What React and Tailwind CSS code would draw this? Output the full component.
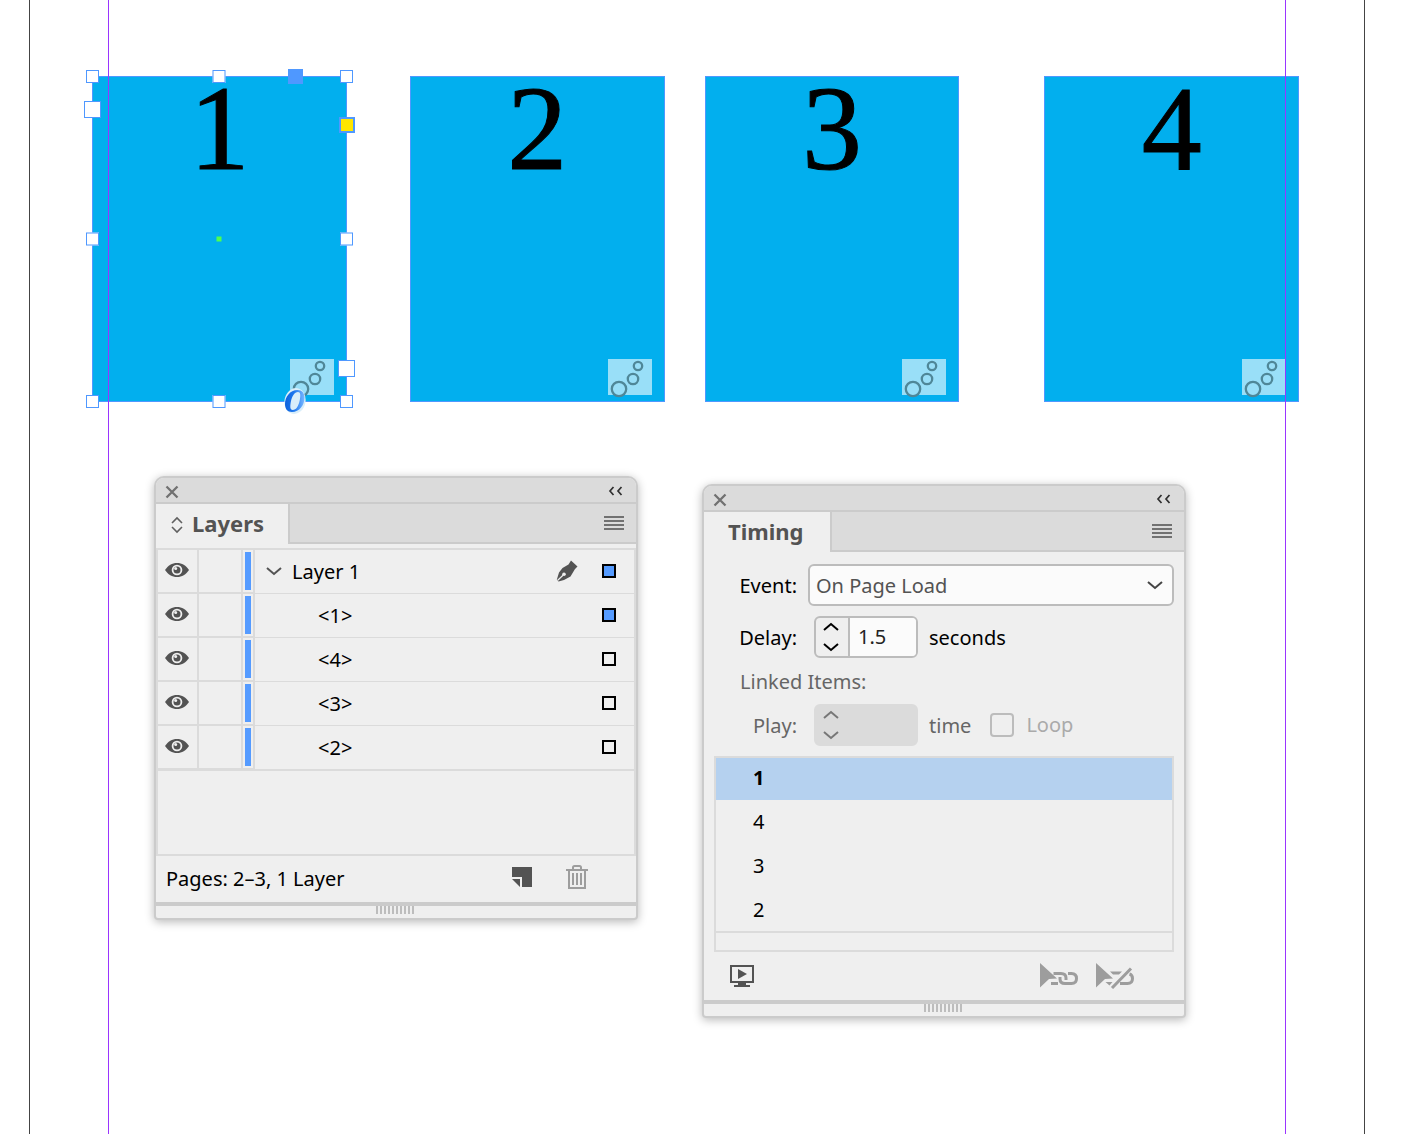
import React from "react";

const HANDLE = "absolute size-[13px] border border-[#4f98ff] bg-white";

function Badge() {
  return (
    <div className="absolute right-3 bottom-[6px] h-9 w-11 bg-[#99dff8]">
      <svg className="overflow-visible" width="44" height="36" fill="none" stroke="#4f8798" strokeWidth="2.300">
        <circle cx="11" cy="30" r="7.200" />
        <circle cx="25" cy="20" r="5.200" />
        <circle cx="30" cy="7" r="4.200" />
      </svg>
    </div>
  );
}

function Selection() {
  return (
    <>
      <span className={`${HANDLE} -top-[7px] -left-[7px]`} />
      <span className={`${HANDLE} -top-[7px] left-1/2 -translate-x-1/2`} />
      <span className={`${HANDLE} -top-[7px] -right-[7px]`} />
      <span className={`${HANDLE} top-1/2 -left-[7px] -translate-y-1/2`} />
      <span className={`${HANDLE} top-1/2 -right-[7px] -translate-y-1/2`} />
      <span className={`${HANDLE} -bottom-[7px] -left-[7px]`} />
      <span className={`${HANDLE} -bottom-[7px] left-1/2 -translate-x-1/2`} />
      <span className={`${HANDLE} -right-[7px] -bottom-[7px]`} />
      <span className="absolute top-6 -left-[9px] size-[17px] border border-[#4f98ff] bg-white" />
      <span className="absolute -right-[9px] bottom-6 size-[17px] border border-[#4f98ff] bg-white" />
      <span className="absolute -top-2 right-[43px] size-[15px] bg-[#4f98ff]" />
      <span className="absolute top-10 -right-[9px] size-4 border-2 border-[#4f98ff] bg-[#ffe600]" />
      <span className="absolute top-1/2 left-1/2 size-[5px] -translate-x-1/2 -translate-y-1/2 bg-[#4fff4f]" />
      <svg className="absolute right-[38px] -bottom-3.5" width="26" height="28" viewBox="0 0 26 28" fill="none">
        <defs>
          <linearGradient id="ring" x1="0" y1="0" x2="1" y2="0">
            <stop offset="0" stopColor="#0f62dc" />
            <stop offset="0.45" stopColor="#1c76ee" />
            <stop offset="1" stopColor="#7ab8ff" />
          </linearGradient>
        </defs>
        <ellipse cx="13" cy="14" rx="10.500" ry="13" transform="rotate(12 13 14)" fill="#d9eefa" />
        <path
          fillRule="evenodd"
          fill="url(#ring)"
          d="M15.500 3C8 3 3 10 3 17c0 5 2.500 8 7 8 7.500 0 12.500-7 12.500-14.500C22.500 6 20 3 15.500 3zM16 5c2.500 0 2.800 3 1.800 8-1.200 6-3.500 10-7 10-3 0-2.800-4-1.800-9C10.200 9 12.500 5 16 5z"
        />
      </svg>
    </>
  );
}

function Frame({ label, className = "", selected }) {
  return (
    <div className={`relative h-[326px] min-w-0 flex-1 border border-[#4f98ff] bg-[#02afee] text-center ${className}`}>
      <span className="font-['Liberation_Serif',serif] text-[120px] leading-[104px] text-black [-webkit-text-stroke:1px_black]">
        {label}
      </span>
      <Badge />
      {selected && <Selection />}
    </div>
  );
}

function Chevron({ up, color = "#535353" }) {
  return (
    <svg width="16" height="10" viewBox="0 0 16 10" fill="none" stroke={color} strokeWidth="2">
      <path d={up ? "M1 8l7-6 7 6" : "M1 2l7 6 7-6"} />
    </svg>
  );
}

function Panel({ title, tabClass, sort, className = "", children }) {
  return (
    <section
      className={`min-w-0 flex-1 rounded-t-[10px] rounded-b-sm border-2 border-[#cbcbcb] bg-[#efefef] shadow-[0_2px_10px_rgba(0,0,0,0.28)] ${className}`}
    >
      <header className="flex h-[26px] items-center justify-between rounded-t-lg border-b-2 border-[#cbcbcb] bg-[#dbdbdb] pr-[13px] pl-2">
        <button aria-label="Close" className="pt-1">
          <svg width="16" height="14" viewBox="0 0 16 14" stroke="#717171" strokeWidth="2.300">
            <path d="M2.500 1.500l11 11M13.500 1.500l-11 11" />
          </svg>
        </button>
        <button aria-label="Collapse panel" className="pt-0.5">
          <svg width="16" height="12" viewBox="0 0 16 12" fill="none" stroke="#2f2f2f" strokeWidth="1.700">
            <path d="M6.500 2L3 6l3.500 4M14.500 2L11 6l3.500 4" />
          </svg>
        </button>
      </header>
      <div className="flex h-10">
        <h2
          className={`flex items-center gap-2 border-r-2 border-[#cbcbcb] pb-0.5 text-[22px] leading-8 font-bold text-[#535353] ${tabClass}`}
        >
          {sort && (
            <svg className="mt-1" width="14" height="18" viewBox="0 0 14 18" fill="none" stroke="#606060" strokeWidth="1.600">
              <path d="M2 7l5-5 5 5M2 11l5 5 5-5" />
            </svg>
          )}
          {title}
        </h2>
        <div className="flex flex-1 items-center justify-end border-b-2 border-[#cbcbcb] bg-[#dbdbdb] pr-3">
          <button aria-label={`${title} menu`} className="flex w-5 flex-col gap-0.5">
            <i className="h-0.5 bg-[#717171]" />
            <i className="h-0.5 bg-[#717171]" />
            <i className="h-0.5 bg-[#717171]" />
            <i className="h-0.5 bg-[#717171]" />
          </button>
        </div>
      </div>
      {children}
      <div className="flex h-4 justify-center gap-0.5 border-t-4 border-[#cbcbcb] pr-0.5">
        {Array.from({ length: 10 }, (_, i) => (
          <i key={i} className="h-2 w-0.5 bg-[#bdbdbd]" />
        ))}
      </div>
    </section>
  );
}

function Eye() {
  return (
    <svg width="24" height="16" viewBox="0 0 24 16">
      <path d="M0 8C3 3.500 7 1 12 1s9 2.500 12 7c-3 4.500-7 7-12 7S3 12.500 0 8z" fill="#535353" />
      <circle cx="12" cy="8" r="5.300" fill="#efefef" />
      <circle cx="12" cy="8" r="3.500" fill="#535353" />
      <circle cx="10.700" cy="6.500" r="1.500" fill="#efefef" />
    </svg>
  );
}

function Pen() {
  return (
    <svg width="22" height="22" viewBox="0 0 22 22">
      <path d="M15 0.500L21.500 6.500 19 9l-4.500 7.500L8 20l-5.500 1.500-1.700-1.700L3 12.500 6.500 8l6-3.500z" fill="#535353" />
      <path d="M1.500 20.500L7 15.200" stroke="#efefef" strokeWidth="1.200" />
      <circle cx="8" cy="14.300" r="1.800" fill="#efefef" />
    </svg>
  );
}

function LayerRow({ name, top, active }) {
  return (
    <li className="flex h-11">
      <button
        aria-label={`Toggle ${name}`}
        className="flex w-[41px] items-center justify-center border-r-2 border-b-2 border-[#dbdbdb] pr-0.5 pb-0.5"
      >
        <Eye />
      </button>
      <span className="w-11 border-r-2 border-b-2 border-[#dbdbdb]" />
      <span className="flex w-3 justify-end border-r-2 border-b-2 border-[#dbdbdb] pt-0.5 pr-0.5">
        <i className="h-[38px] w-1.5 bg-[#559bff]" />
      </span>
      <span className={`flex flex-1 items-center gap-2.5 border-b border-[#dbdbdb] pr-[18px] ${top ? "pl-[11px]" : "pl-[63px]"}`}>
        {top && (
          <button aria-label="Collapse layer" className="pb-0.5">
            <Chevron />
          </button>
        )}
        <span className="flex-1">{name}</span>
        <span className="flex items-center gap-6 pb-0.5">
          {top && <Pen />}
          <button
            aria-label={`Select items on ${name}`}
            className={`size-3.5 border-2 border-black ${active ? "bg-[#559bff]" : ""}`}
          />
        </span>
      </span>
    </li>
  );
}

function LayersPanel() {
  return (
    <Panel title="Layers" tabClass="pl-3.5 pr-6" sort>
      <div className="mt-1 border-2 border-[#dbdbdb] pb-[83px]">
        <ul className="border-b border-[#dbdbdb]">
          <LayerRow name="Layer 1" top active />
          <LayerRow name="<1>" active />
          <LayerRow name="<4>" />
          <LayerRow name="<3>" />
          <LayerRow name="<2>" />
        </ul>
      </div>
      <footer className="flex h-[46px] items-center pr-12 pl-2.5">
        <span className="flex-1">Pages: 2–3, 1 Layer</span>
        <button aria-label="New layer" className="mr-[34px] pb-1">
          <svg width="20" height="20" viewBox="0 0 20 20" fill="#535353">
            <path d="M0 0h20v20H10V10H0zM0 12h8v8z" />
          </svg>
        </button>
        <button aria-label="Delete layer" className="pb-1">
          <svg width="22" height="24" viewBox="0 0 22 24" fill="none" stroke="#9d9d9d" strokeWidth="2">
            <path d="M0 5h22M3 5v18h16V5M7 5V2.500Q7 1 8.500 1h5Q15 1 15 2.500V5M7 8v12M11 8v12M15 8v12" />
          </svg>
        </button>
      </footer>
    </Panel>
  );
}

function Spinner({ id, value, disabled }) {
  const color = disabled ? "#777777" : "#000000";
  return (
    <div
      className={`flex h-[42px] w-[104px] overflow-hidden rounded-md border-2 ${disabled ? "border-[#dbdbdb] bg-[#dbdbdb]" : "border-[#bcbcbc]"}`}
    >
      <div
        className={`flex w-[34px] shrink-0 flex-col items-center justify-between border-r-2 py-1 pr-0.5 ${disabled ? "border-transparent" : "border-[#bcbcbc]"}`}
      >
        <button aria-label="Increase" disabled={disabled}>
          <Chevron up color={color} />
        </button>
        <button aria-label="Decrease" disabled={disabled}>
          <Chevron color={color} />
        </button>
      </div>
      <input
        id={id}
        defaultValue={value}
        disabled={disabled}
        className={`w-full min-w-0 pl-2 text-[#222222] outline-none ${disabled ? "bg-[#dbdbdb]" : "bg-[#fbfbfb]"}`}
      />
    </div>
  );
}

function TimingPanel() {
  return (
    <Panel title="Timing" tabClass="pl-6 pr-[26px]" className="mt-2">
      <div className="px-2.5 pt-3">
        <div className="flex items-center gap-[11px]">
          <label htmlFor="event" className="w-[83px] pt-0.5 text-right">Event:</label>
          <div className="relative flex-1">
            <select
              id="event"
              className="h-[42px] w-full appearance-none rounded-md border-2 border-[#bcbcbc] bg-[#fbfbfb] pt-0.5 pl-1.5 text-[#535353]"
            >
              <option>On Page Load</option>
            </select>
            <span className="pointer-events-none absolute inset-y-0 right-[11px] flex items-center">
              <Chevron color="#444444" />
            </span>
          </div>
        </div>
        <div className="mt-2.5 flex items-center">
          <label htmlFor="delay" className="mr-[17px] w-[83px] pt-0.5 text-right">Delay:</label>
          <Spinner id="delay" value="1.5" />
          <span className="pt-0.5 pl-[11px]">seconds</span>
        </div>
        <p className="h-[46px] pl-[26px] leading-[48px] text-[#666666]">Linked Items:</p>
        <div className="flex items-center text-[#666666]">
          <label htmlFor="play" className="mr-[17px] w-[83px] pt-0.5 text-right">Play:</label>
          <Spinner id="play" value="" disabled />
          <span className="pt-0.5 pl-[11px]">time</span>
          <label className="ml-[19px] flex items-center gap-3 text-[#aaaaaa]">
            <input type="checkbox" disabled className="size-6 appearance-none rounded-sm border-2 border-[#bcbcbc]" />
            Loop
          </label>
        </div>
        <ul className="mt-2.5 border-2 border-[#dbdbdb] pb-[17px] leading-10">
          <li className="h-[42px] bg-[#b5d1ef] pl-[37px] font-bold">1</li>
          <li className="h-11 pl-[37px] leading-[44px]">4</li>
          <li className="h-11 pl-[37px] leading-[44px]">3</li>
          <li className="h-[45px] border-b-2 border-[#dbdbdb] pl-[37px] leading-[44px]">2</li>
        </ul>
      </div>
      <footer className="flex h-12 items-center gap-[18px] pr-[50px] pl-[26px]">
        <button aria-label="Preview spread" className="mr-auto">
          <svg width="24" height="22" viewBox="0 0 24 22" fill="#535353">
            <path d="M0 0h24v18H16v2h4v2H4v-2h4v-2H0zM2 2v14h20V2z" fillRule="evenodd" />
            <path d="M8 4l9 5-9 5z" />
          </svg>
        </button>
        <button aria-label="Play together">
          <svg width="38" height="26" viewBox="0 0 38 26" fill="none" stroke="#9d9d9d" strokeWidth="3">
            <path d="M0 0l17 15.500-8 0.500-9 8.500z" fill="#9d9d9d" stroke="none" />
            <path d="M13.500 10.500h7.500q5 0 5 4.500v2M11 20.500h7M20 14v2q0 4.500 5 4.500h6.500q5 0 5-5t-5-5H28" />
          </svg>
        </button>
        <button aria-label="Play separately">
          <svg width="38" height="26" viewBox="0 0 38 26" fill="none" stroke="#9d9d9d" strokeWidth="3">
            <path d="M0 0l17 15.500-8 0.500-9 8.500z" fill="#9d9d9d" stroke="none" />
            <path d="M14 8.500h12l-3 3h-6zM9.500 19h7l-3 3.500z" fill="#9d9d9d" stroke="none" />
            <path d="M24 20.500h7.500q5 0 5-5 0-3.500-3-4.500M35 5.500L16 25" />
          </svg>
        </button>
      </footer>
    </Panel>
  );
}

export default function App() {
  return (
    <main className="relative min-h-screen overflow-hidden bg-white font-['Noto_Sans',sans-serif] text-xl leading-7 text-black">
      <div className="flex pt-[76px] pr-[129px] pl-[92px]">
        <Frame label="1" selected />
        <Frame label="2" className="ml-[63px]" />
        <Frame label="3" className="ml-10" />
        <Frame label="4" className="ml-[85px]" />
      </div>
      <div className="flex items-start gap-16 pt-[74px] pr-[242px] pb-12 pl-[154px]">
        <LayersPanel />
        <TimingPanel />
      </div>
      <i className="pointer-events-none absolute inset-y-0 left-[29px] w-px bg-[#444444]" />
      <i className="pointer-events-none absolute inset-y-0 left-[108px] w-px bg-[#9a35ff]" />
      <i className="pointer-events-none absolute inset-y-0 right-[142px] w-px bg-[#9a35ff]" />
      <i className="pointer-events-none absolute inset-y-0 right-[63px] w-px bg-[#444444]" />
    </main>
  );
}
